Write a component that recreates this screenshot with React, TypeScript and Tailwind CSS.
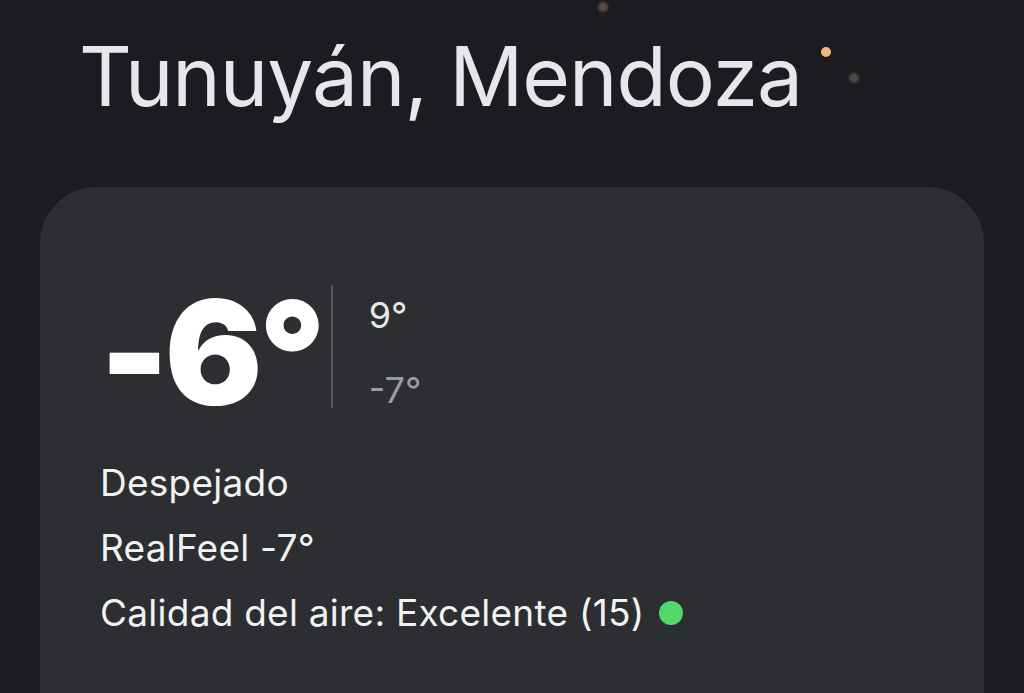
import React from 'react';

const font = { fontFamily: 'Inter, "Noto Sans", sans-serif' };

const App: React.FC = () => {
  return (
    <div
      className="relative w-full h-[693px] overflow-hidden bg-[#1a1c1f] text-[#e8e9eb]"
      style={font}
    >
      {/* floating particles */}
      <div className="absolute left-[598px] top-[2px] w-[10px] h-[10px] rounded-full bg-[#5a4c44] blur-[1px]"></div>
      <div className="absolute left-[821px] top-[47px] w-[10px] h-[10px] rounded-full bg-[#f5b57f]"></div>
      <div className="absolute left-[849px] top-[73px] w-[10px] h-[10px] rounded-full bg-[#4f4a48] blur-[1px]"></div>

      <h1 className="pl-[79px] pt-[27px] text-[82px] leading-[100px] font-normal tracking-[-1px] text-[#e6e7e9]">
        Tunuyán, Mendoza
      </h1>

      <div className="mx-[40px] mt-[60px] h-[600px] rounded-[56px] bg-[#2c2e31] pt-[96px] pl-[60px]">
        <div className="flex items-start">
          <div className="text-[145px] leading-[140px] font-black tracking-[-4px] text-white">-6°</div>
          <div className="ml-[9px] mt-[2px] w-[2px] h-[123px] bg-[#55585b]"></div>
          <div className="ml-[36px] mt-[12px] flex flex-col gap-[35px] text-[36px] leading-[40px]">
            <span className="text-[#e6e7e9]">9°</span>
            <span className="text-[#9b9c9e]">-7°</span>
          </div>
        </div>

        <div className="mt-[27px] flex flex-col text-[37px] leading-[65px] tracking-[0.25px] text-[#f1f2f3]">
          <span>Despejado</span>
          <span>RealFeel -7°</span>
          <span className="flex items-center">
            Calidad del aire: Excelente (15)
            <span className="ml-[15px] inline-block w-[24px] h-[24px] rounded-full bg-[#51d868]"></span>
          </span>
        </div>
      </div>
    </div>
  );
};

export default App;
